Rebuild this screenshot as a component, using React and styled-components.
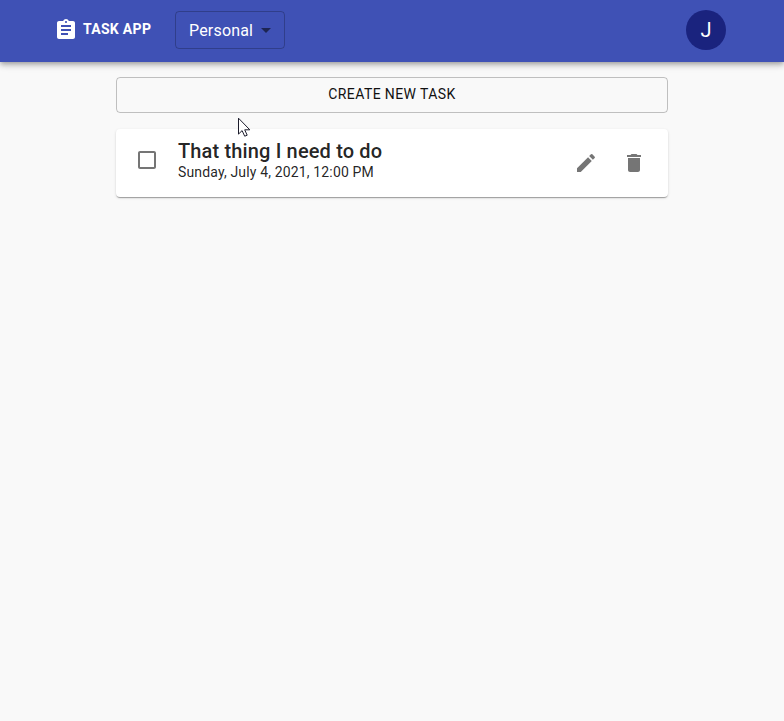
import React from "react";
import styled, { createGlobalStyle } from "styled-components";

const GlobalStyle = createGlobalStyle`
  *, *::before, *::after { box-sizing: border-box; }
  body {
    margin: 0;
    background: #f9f9f9;
    color: rgba(0, 0, 0, 0.87);
    font-family: Roboto, sans-serif;
  }
`;

const Page = styled.div`
  min-height: 100vh;
`;

const AppBar = styled.header`
  height: 62px;
  padding: 0 58px 2px 54px;
  display: flex;
  align-items: center;
  color: #fff;
  background: #3f51b5;
  box-shadow: 0 2px 4px -1px rgba(0, 0, 0, 0.2), 0 4px 5px 0 rgba(0, 0, 0, 0.14),
    0 1px 10px 0 rgba(0, 0, 0, 0.12);
`;

const Icon = styled.svg`
  display: block;
  width: 24px;
  height: 24px;
  fill: currentColor;
`;

const Brand = styled.a`
  display: flex;
  align-items: center;
  gap: 5px;
  width: 121px;
`;

const BrandName = styled.span`
  padding-bottom: 2px;
  font-size: 14px;
  font-weight: 700;
  line-height: 22px;
  letter-spacing: 0.3px;
  white-space: nowrap;
`;

const Select = styled.button`
  width: 110px;
  height: 38px;
  padding: 0 6px 0 13px;
  display: flex;
  align-items: center;
  justify-content: space-between;
  color: #fff;
  background: transparent;
  border: 1px solid rgba(0, 0, 0, 0.23);
  border-radius: 4px;
  font: 400 16px/19px Roboto, sans-serif;
  letter-spacing: 0.18px;
`;

const Arrow = styled(Icon)`
  color: rgba(0, 0, 0, 0.54);
`;

const Avatar = styled.div`
  width: 40px;
  height: 40px;
  margin-left: auto;
  display: flex;
  align-items: center;
  justify-content: center;
  border-radius: 50%;
  background: #1a237e;
  font-size: 20px;
  line-height: 20px;
`;

const Content = styled.main`
  width: 552px;
  margin: 15px auto 0;
  display: flex;
  flex-direction: column;
  gap: 16px;
`;

const CreateButton = styled.button`
  height: 36px;
  padding: 0 0 2px;
  border: 1px solid rgba(0, 0, 0, 0.23);
  border-radius: 4px;
  background: transparent;
  color: #111;
  font: 400 14px/24px Roboto, sans-serif;
  letter-spacing: 0.4px;
`;

const TaskCard = styled.article`
  height: 68px;
  padding: 0 22px 0 19px;
  display: flex;
  background: #fff;
  border-radius: 4px;
  box-shadow: 0 2px 1px -1px rgba(0, 0, 0, 0.2), 0 1px 1px 0 rgba(0, 0, 0, 0.14),
    0 1px 3px 0 rgba(0, 0, 0, 0.12);
`;

const Checkbox = styled.div`
  padding-top: 19px;
  color: rgba(0, 0, 0, 0.54);
`;

const TaskText = styled.div`
  flex: 1;
  padding: 11px 0 0 19px;
`;

const TaskTitle = styled.h2`
  margin: 0;
  font-size: 20px;
  font-weight: 500;
  line-height: 22px;
  letter-spacing: 0.15px;
`;

const TaskDate = styled.p`
  margin: 0;
  font-size: 14px;
  line-height: 20px;
  letter-spacing: 0.15px;
`;

const Actions = styled.div`
  display: flex;
  gap: 24px;
  padding-top: 22px;
  color: rgba(0, 0, 0, 0.54);
`;

const Cursor = styled.svg`
  position: absolute;
  left: 238px;
  top: 117px;
  width: 13px;
  height: 20px;
`;

export default function App() {
  return (
    <Page>
      <GlobalStyle />
      <AppBar>
        <Brand>
          <Icon viewBox="0 0 24 24">
            <path d="M19 3h-4.18C14.4 1.84 13.3 1 12 1c-1.3 0-2.4.84-2.82 2H5c-1.1 0-2 .9-2 2v14c0 1.1.9 2 2 2h14c1.1 0 2-.9 2-2V5c0-1.1-.9-2-2-2zm-7 0c.55 0 1 .45 1 1s-.45 1-1 1-1-.45-1-1 .45-1 1-1zm2 14H7v-2h7v2zm3-4H7v-2h10v2zm0-4H7V7h10v2z" />
          </Icon>
          <BrandName>TASK APP</BrandName>
        </Brand>
        <Select>
          Personal
          <Arrow viewBox="0 0 24 24">
            <path d="M7 10l5 5 5-5z" />
          </Arrow>
        </Select>
        <Avatar>J</Avatar>
      </AppBar>
      <Content>
        <CreateButton>CREATE NEW TASK</CreateButton>
        <TaskCard>
          <Checkbox role="checkbox" aria-checked="false">
            <Icon viewBox="0 0 24 24">
              <path d="M19 5v14H5V5h14m0-2H5c-1.1 0-2 .9-2 2v14c0 1.1.9 2 2 2h14c1.1 0 2-.9 2-2V5c0-1.1-.9-2-2-2z" />
            </Icon>
          </Checkbox>
          <TaskText>
            <TaskTitle>That thing I need to do</TaskTitle>
            <TaskDate>Sunday, July 4, 2021, 12:00 PM</TaskDate>
          </TaskText>
          <Actions>
            <Icon viewBox="0 0 24 24">
              <path d="M3 17.25V21h3.75L17.81 9.94l-3.75-3.75L3 17.25zM20.71 7.04c.39-.39.39-1.02 0-1.41l-2.34-2.34a.9959.9959 0 0 0-1.41 0l-1.83 1.83 3.75 3.75 1.83-1.83z" />
            </Icon>
            <Icon viewBox="0 0 24 24">
              <path d="M6 19c0 1.1.9 2 2 2h8c1.1 0 2-.9 2-2V7H6v12zM19 4h-3.5l-1-1h-5l-1 1H5v2h14V4z" />
            </Icon>
          </Actions>
        </TaskCard>
      </Content>
      <Cursor viewBox="0 0 13 20">
        <path
          d="M.5 1.2v15.9l3.6-3.5 2.6 5.6 2.5-1-2.5-5.4h5.1z"
          fill="#fff"
          stroke="#1c1c2c"
        />
      </Cursor>
    </Page>
  );
}
